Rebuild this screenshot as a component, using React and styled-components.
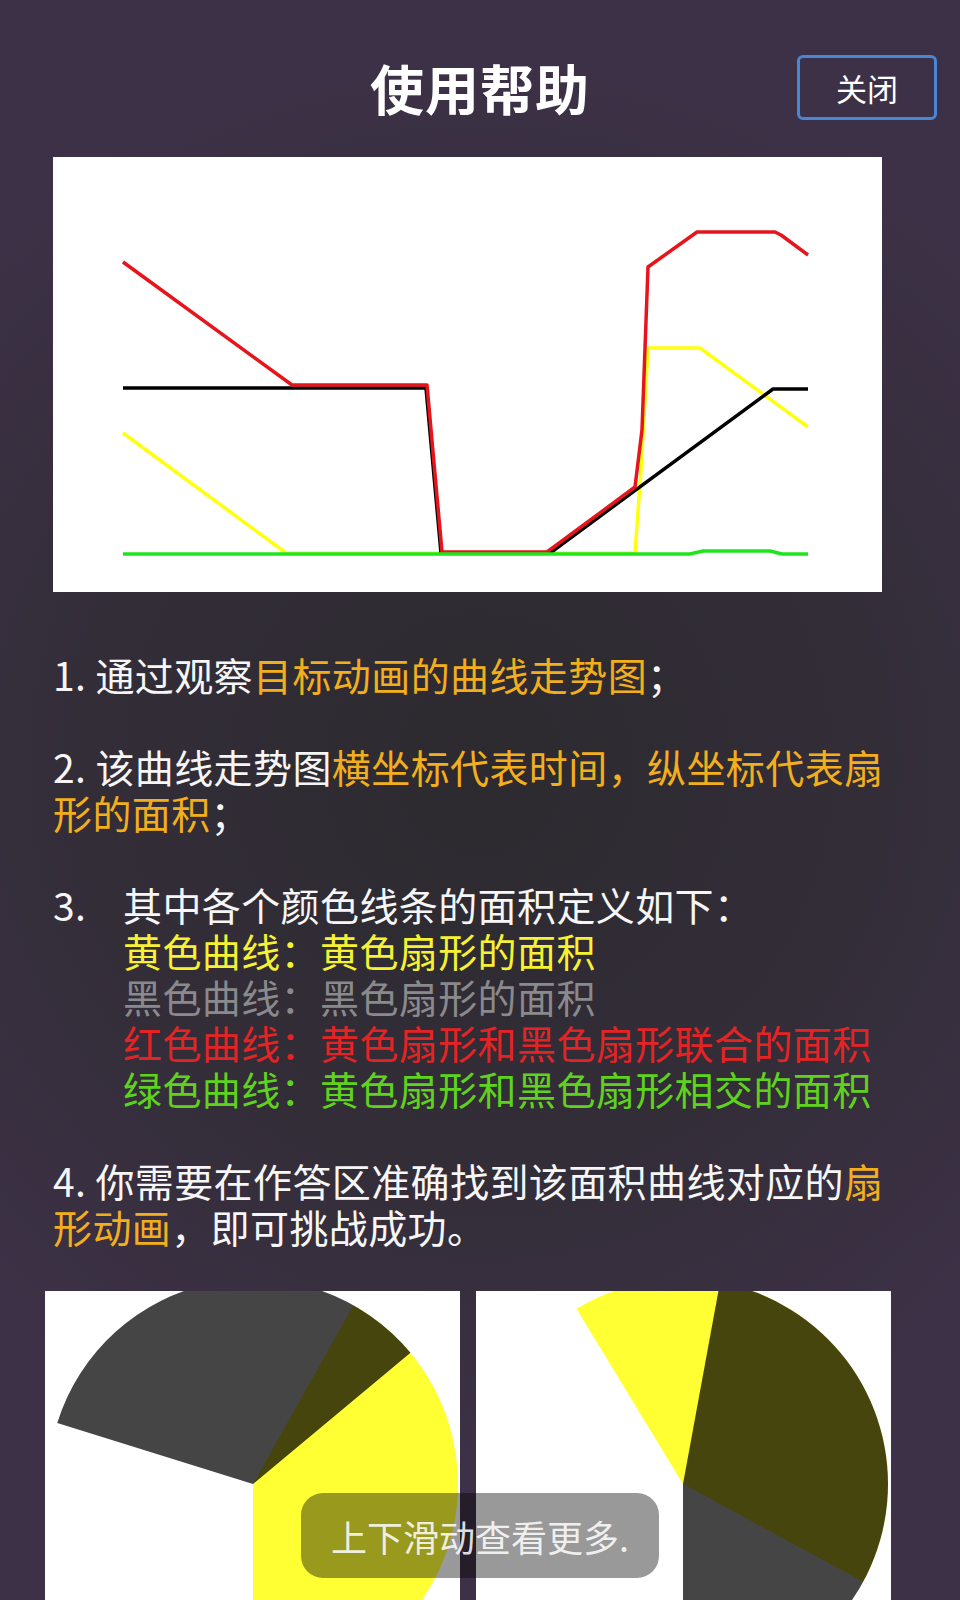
import React from 'react'
import styled, { createGlobalStyle } from 'styled-components'

const GlobalStyle = createGlobalStyle`
    html, body {
        margin: 0;
        padding: 0;
        background: #352e3c;
    }
    * {
        box-sizing: border-box;
    }
`

const Page = styled.div`
    position: relative;
    width: 960px;
    height: 1600px;
    overflow: hidden;
    background: radial-gradient(ellipse 75% 45% at 50% 48%, #2c2a2f 0%, #332d38 55%, #3d3147 100%);
    font-family: "Noto Sans CJK SC", "Noto Sans", sans-serif;
    color: #f6f6f6;
`

const Header = styled.div`
    display: grid;
    grid-template-columns: 1fr auto 1fr;
    align-items: center;
    padding-top: 55px;
`

const Title = styled.h1`
    grid-column: 2;
    margin: 0;
    font-size: 54px;
    font-weight: 700;
    line-height: 62px;
    color: #ffffff;
    letter-spacing: 1px;
`

const CloseButton = styled.button`
    grid-column: 3;
    justify-self: end;
    margin-right: 23px;
    width: 140px;
    height: 65px;
    background: transparent;
    border: 3px solid #4a86d6;
    border-radius: 6px;
    color: #ffffff;
    font-family: inherit;
    font-size: 31px;
    cursor: pointer;
`

const Body = styled.div`
    padding-left: 53px;
    width: 960px;
`

const Chart = styled.svg`
    display: block;
    margin-top: 37px;
    width: 829px;
    height: 435px;
    background: #ffffff;
`

const Steps = styled.div`
    margin-top: 59px;
    width: 840px;
    font-size: 39px;
    line-height: 46px;
    letter-spacing: 0.4px;
`

const Step = styled.p`
    margin: 0 0 46px 0;
`

const ListStep = styled.div`
    display: flex;
    margin: 0 0 46px 0;
`

const Num = styled.span`
    flex: 0 0 70px;
`

const Lines = styled.div`
    display: flex;
    flex-direction: column;
`

const Line = styled.span`
    color: ${p => p.$color || 'inherit'};
`

const Hl = styled.span`
    color: #f2ae1c;
`

const PieRow = styled.div`
    display: flex;
    gap: 16px;
    margin-top: -4px;
    padding-left: 45px;
`

const PieBox = styled.svg`
    display: block;
    width: 415px;
    height: 415px;
    background: #ffffff;
`

const Toast = styled.div`
    position: absolute;
    left: 50%;
    bottom: 22px;
    transform: translateX(-50%);
    width: 358px;
    height: 85px;
    display: flex;
    align-items: center;
    justify-content: center;
    border-radius: 22px;
    background: rgba(0, 0, 0, 0.4);
    color: rgba(255, 255, 255, 0.86);
    font-size: 36px;
`

// chart points in page coordinates, shifted to the chart box origin
const OX = 53
const OY = 157
const pts = list => list.map(([x, y]) => `${x - OX},${y - OY}`).join(' ')

const series = [
    { color: '#ffff10', points: [[123, 433], [286, 553], [635, 553], [641, 470], [648, 348], [700, 348], [808, 427]] },
    { color: '#000000', points: [[123, 388], [426, 388], [441, 553], [550, 553], [773, 389], [808, 389]] },
    { color: '#e8141c', points: [[123, 262], [292, 385], [427, 385], [442, 552], [547, 552], [635, 487], [642, 430], [648, 267], [697, 232], [775, 232], [781, 235], [808, 255]] },
    { color: '#1ee61e', points: [[123, 554], [690, 554], [703, 551], [770, 551], [782, 554], [808, 554]] },
]

const sector = (cx, cy, r, a0, a1) => {
    const rad = a => (a * Math.PI) / 180
    const x0 = cx + r * Math.cos(rad(a0))
    const y0 = cy + r * Math.sin(rad(a0))
    const x1 = cx + r * Math.cos(rad(a1))
    const y1 = cy + r * Math.sin(rad(a1))
    const large = a1 - a0 > 180 ? 1 : 0
    return `M${cx},${cy} L${x0},${y0} A${r},${r} 0 ${large} 1 ${x1},${y1} Z`
}

function Pie({ cx, yellow, black }) {
    return (
        <PieBox viewBox="0 0 415 415">
            <path d={sector(cx, 193, 205, yellow[0], yellow[1])} fill="#ffff33" />
            <path d={sector(cx, 193, 205, black[0], black[1])} fill="#000000" fillOpacity="0.73" />
        </PieBox>
    )
}

export default function App() {
    return (
        <Page>
            <GlobalStyle />
            <Header>
                <Title>使用帮助</Title>
                <CloseButton>关闭</CloseButton>
            </Header>

            <Body>
                <Chart viewBox="0 0 829 435">
                    {series.map(s => (
                        <polyline
                            key={s.color}
                            points={pts(s.points)}
                            fill="none"
                            stroke={s.color}
                            strokeWidth="3.5"
                            strokeLinejoin="round"
                        />
                    ))}
                </Chart>

                <Steps>
                    <Step>1. 通过观察<Hl>目标动画的曲线走势图</Hl>；</Step>
                    <Step>2. 该曲线走势图<Hl>横坐标代表时间，纵坐标代表扇形的面积</Hl>；</Step>
                    <ListStep>
                        <Num>3.</Num>
                        <Lines>
                            <Line>其中各个颜色线条的面积定义如下：</Line>
                            <Line $color="#f6f232">黄色曲线：黄色扇形的面积</Line>
                            <Line $color="#8a8a8c">黑色曲线：黑色扇形的面积</Line>
                            <Line $color="#e42424">红色曲线：黄色扇形和黑色扇形联合的面积</Line>
                            <Line $color="#5fd21e">绿色曲线：黄色扇形和黑色扇形相交的面积</Line>
                        </Lines>
                    </ListStep>
                    <Step>4. 你需要在作答区准确找到该面积曲线对应的<Hl>扇形动画</Hl>，即可挑战成功。</Step>
                </Steps>
            </Body>

            <PieRow>
                <Pie cx={208} yellow={[299.3, 450]} black={[197.3, 320.2]} />
                <Pie cx={207} yellow={[238.7, 388.5]} black={[280.4, 450]} />
            </PieRow>

            <Toast>上下滑动查看更多.</Toast>
        </Page>
    )
}
